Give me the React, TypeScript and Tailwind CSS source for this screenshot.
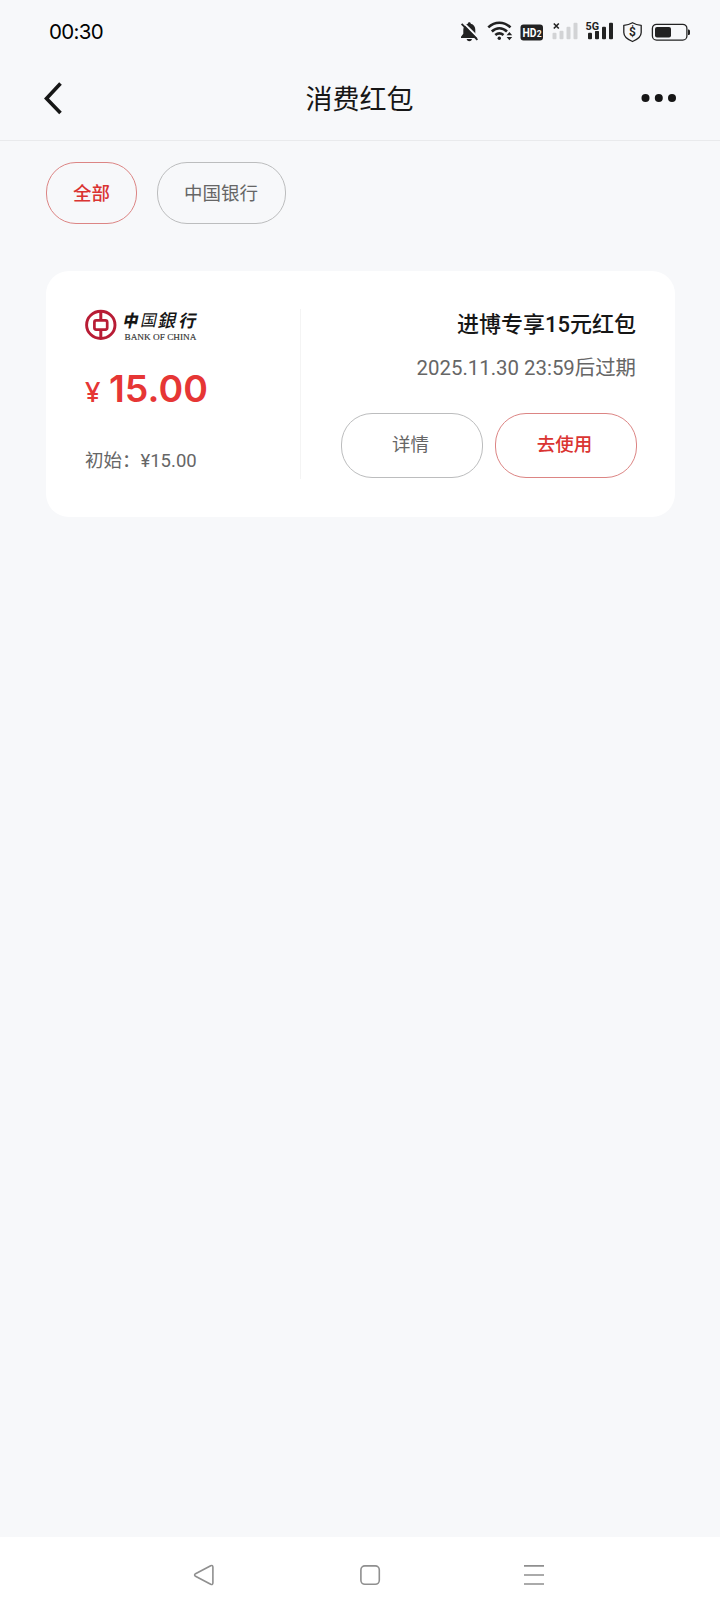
import type { ReactNode } from 'react'

const banks = ['全部', '中国银行']

function SignalBars({ color }: { color: string }) {
  return (
    <g fill={color}>
      <rect x="0" y="10" width="4" height="6.5" rx="1" />
      <rect x="7" y="8" width="4" height="8.5" rx="1" />
      <rect x="14" y="4" width="4" height="12.5" rx="1" />
      <rect x="21" y="0" width="4" height="16.5" rx="1" />
    </g>
  )
}

function StatusIcons() {
  return (
    <svg width="240" height="30" viewBox="455 17 240 30" fill="none">
      {/* Muted bell */}
      <path d="M469.300 22.200c-.9 0-1.500.6-1.500 1.500-3 .8-4.500 3-4.500 6v4l-2.300 3v1.300h16.600v-1.300l-2.300-3v-4c0-3-1.500-5.200-4.500-6 0-.9-.6-1.500-1.500-1.500z" fill="#222" />
      <path d="M466.600 39h5.400c-.5 1.500-1.300 2.200-2.700 2.200s-2.200-.7-2.700-2.200z" fill="#222" />
      <path d="M463.300 22.600l15.600 15.600" stroke="#f7f8fa" strokeWidth="2" />
      <path d="M461.600 23.800l15.800 16" stroke="#222" strokeWidth="1.800" />

      {/* Wifi */}
      <g stroke="#222" strokeWidth="2.600">
        <path d="M488.300 27.400c6.500-6.200 15.700-6.200 22.200 0" />
        <path d="M491.800 31.500c4.600-4.300 10.600-4.300 15.200 0" />
        <path d="M495.300 35.100c2.500-2.200 5.700-2.200 8.200 0" />
      </g>
      <circle cx="499.300" cy="38.200" r="1.700" fill="#222" />
      <path d="M506.600 35.200l2.800-3.200 2.800 3.200zM506.600 37l2.800 3.200 2.800-3.200z" fill="#222" />

      {/* HD */}
      <rect x="520.500" y="24.500" width="22.500" height="16" rx="3" fill="#222" />
      <text x="522.500" y="37" fontFamily="Roboto, sans-serif" fontSize="12.500" fontWeight="700" fill="#fff" textLength="14" lengthAdjust="spacingAndGlyphs">HD</text>
      <text x="536.700" y="37" fontFamily="Roboto, sans-serif" fontSize="8.500" fontWeight="700" fill="#fff">2</text>

      {/* SIM 1, no service */}
      <path d="M553.800 23.500l5 5M558.800 23.500l-5 5" stroke="#222" strokeWidth="1.600" />
      <g transform="translate(552.500 22.700)"><SignalBars color="#d2d3d5" /></g>

      {/* SIM 2 */}
      <g transform="translate(588 22.700)"><SignalBars color="#222" /></g>
      <rect x="585" y="21" width="15" height="10" fill="#f7f8fa" />
      <text x="585.500" y="30" fontFamily="Roboto, sans-serif" fontSize="11.500" fontWeight="700" fill="#222" textLength="13.500" lengthAdjust="spacingAndGlyphs">5G</text>

      {/* Shield */}
      <path d="M632.500 22.700c2.600 1.600 5.500 2.400 8.700 2.600v7.200c0 4.300-3.500 6.900-8.700 9-5.200-2.100-8.700-4.700-8.700-9v-7.200c3.200-.2 6.100-1 8.700-2.600z" stroke="#222" strokeWidth="1.300" strokeLinejoin="round" />
      <text x="632.500" y="36.300" textAnchor="middle" fontFamily="Roboto, sans-serif" fontSize="12" fontWeight="600" fill="#222">$</text>

      {/* Battery */}
      <rect x="652.400" y="24.300" width="34.500" height="15.800" rx="4.200" stroke="#222" strokeWidth="1.300" />
      <rect x="655" y="27" width="16" height="10.500" rx="2" fill="#222" />
      <path d="M688 29.500c1.300 0 2 .6 2 1.600v2.400c0 1-.7 1.600-2 1.600z" fill="#222" />
    </svg>
  )
}

function BankLogo() {
  return (
    <svg className="-mt-[16px]" width="140" height="56" viewBox="0 -16 140 56">
      <ellipse cx="15.800" cy="15.900" rx="14.200" ry="13.600" fill="none" stroke="#b81c35" strokeWidth="2.900" />
      <rect x="9.400" y="11.400" width="12.800" height="9.200" rx="1.800" fill="none" stroke="#b81c35" strokeWidth="2.700" />
      <path d="M15.800 2v9M15.800 21v9" stroke="#b81c35" strokeWidth="3" />
      <g fontFamily="'Noto Sans CJK TC', sans-serif" fill="#151515" transform="skewX(-12)">
        <text x="41" y="17.500" fontSize="17" fontWeight="900" textLength="15" lengthAdjust="spacingAndGlyphs">中</text>
        <text x="58.500" y="17" fontSize="16" fontWeight="400">国</text>
        <text x="76" y="18" fontSize="18" fontWeight="500">銀</text>
        <text x="97" y="18" fontSize="17" fontWeight="700">行</text>
      </g>
      <text x="39.500" y="31" fontFamily="'Liberation Serif', serif" fontSize="9" fill="#333" stroke="#333" strokeWidth="0.150" textLength="72" lengthAdjust="spacingAndGlyphs">BANK OF CHINA</text>
    </svg>
  )
}

function Pill({ children, active, className }: { children: ReactNode; active?: boolean; className: string }) {
  return (
    <button
      className={`flex items-center justify-center border text-[18.5px] leading-none ${
        active ? 'border-[#dc8584] text-[#da3432] font-medium' : 'border-[#bcbdbe] text-[#666]'
      } ${className}`}
    >
      {children}
    </button>
  )
}

export default function App() {
  return (
    <div className="flex h-[1612px] w-[720px] flex-col overflow-hidden bg-[#f7f8fa] font-[Roboto,'Noto_Sans_CJK_SC',sans-serif]">
      {/* Status bar */}
      <div className="flex h-[64px] items-center justify-between pr-[25px] pl-[49px]">
        <span className="font-[Inter,sans-serif] text-[20.5px] leading-none tracking-[-0.7px] text-black">00:30</span>
        <StatusIcons />
      </div>

      {/* Title bar */}
      <header className="flex h-[77px] items-center justify-between border-b border-[#e9eaec] pr-[43px] pb-[8px] pl-[42px]">
        <svg width="36" height="36" viewBox="0 0 36 36" fill="none" stroke="#161616" strokeWidth="3.600">
          <path d="M18.500 3.500L4.500 18.500l14 14.500" />
        </svg>
        <h1 className="pt-[4px] text-[27px] leading-none text-[#161616]">消费红包</h1>
        <svg width="36" height="10" viewBox="0 0 36 10" fill="#161616">
          <circle cx="4.500" cy="5" r="4" />
          <circle cx="17.800" cy="5" r="4" />
          <circle cx="31" cy="5" r="4" />
        </svg>
      </header>

      {/* Bank filter */}
      <div className="mt-[21px] ml-[46px] flex gap-5">
        {banks.map((b, i) => (
          <Pill key={b} active={i === 0} className={i === 0 ? 'h-[62px] w-[91px] rounded-[30px] pt-[3px]' : 'h-[62px] w-[129px] rounded-[30px] pt-[3px] pr-px'}>
            {b}
          </Pill>
        ))}
      </div>

      {/* Red packet card */}
      <section className="mx-[46px] mt-[47px] flex h-[246px] w-[629px] rounded-[23px] bg-white py-[38px] pr-[38px] pl-[39px]">
        <div className="flex w-[216px] flex-col border-r border-[#f4f4f4]">
          <BankLogo />
          <div className="mt-[21px] flex items-baseline text-[#e63635]">
            <span className="w-[24px] font-['Noto_Sans',sans-serif] text-[27px] leading-none font-medium">¥</span>
            <span className="font-[Inter,sans-serif] text-[37.5px] leading-none font-semibold">15.00</span>
          </div>
          <div className="mt-[44px] text-[18.5px] leading-none text-[#666]">初始：¥15.00</div>
        </div>
        <div className="flex flex-1 flex-col items-end">
          <h2 className="mt-[5px] mr-px text-[22px] leading-none font-medium text-[#161616]">进博专享15元红包</h2>
          <p className="mt-[22px] mr-px text-[20.4px] leading-none text-[#666]">2025.11.30 23:59后过期</p>
          <div className="mt-[35px] flex gap-[12px]">
            <Pill className="h-[65px] w-[142px] rounded-[31px] pr-[3px] pb-px">详情</Pill>
            <Pill active className="h-[65px] w-[142px] rounded-[31px] pr-[3px] pb-px">去使用</Pill>
          </div>
        </div>
      </section>

      {/* System navigation */}
      <nav className="mt-auto flex h-[75px] items-start gap-[143.5px] bg-white pt-[27px] pl-[193px]">
        <svg width="22" height="22" viewBox="0 0 22 22" fill="none" stroke="#8f8f8f" strokeWidth="1.600" strokeLinejoin="round">
          <path d="M2.500 9.700L17.700 1.700q2.200-.8 2.200 1.600v15.400q0 2.400-2.200 1.600L2.500 12.300q-1.800-1.300 0-2.600z" />
        </svg>
        <svg width="22" height="22" viewBox="0 0 22 22" fill="none" stroke="#8f8f8f" strokeWidth="1.600">
          <rect x="1.900" y="1.900" width="18.400" height="18.400" rx="4" />
        </svg>
        <svg width="22" height="22" viewBox="0 0 22 22" stroke="#8f8f8f" strokeWidth="1.700">
          <path d="M0 1.900h20M0 11h20M0 20h20" />
        </svg>
      </nav>
    </div>
  )
}
